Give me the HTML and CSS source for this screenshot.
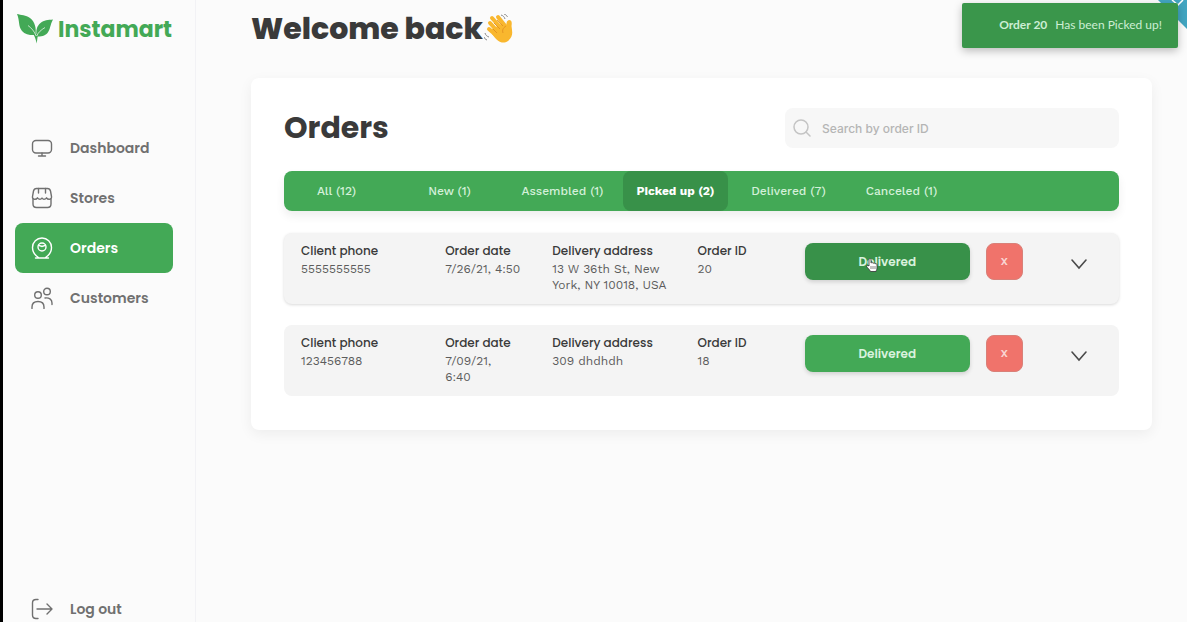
FILE: index.html
```html
<!DOCTYPE html>
<html lang="en">
<head>
  <meta charset="UTF-8">
  <meta name="viewport" content="width=device-width, initial-scale=1.0">
  <title>Instamart</title>
  <link rel="stylesheet" href="styles.css">
</head>
<body>
  <aside class="sidebar">
    <a class="logo" href="#">
      <svg width="36" height="30" viewBox="0 0 36 30">
        <path d="M0 0C4 1 9 1 13 4C18 8 19.500 14 18.500 21C14 21.500 8 20.500 5 17C1 12 3 7 0 0Z" fill="#43a956"/>
        <path d="M36 5.500C31 6 27 6 23.500 9C19.500 12.500 19 16 19.500 22.500C24 22.500 28 22 30.500 19C33.500 15 33 11 36 5.500Z" fill="#43a956"/>
        <path d="M18 19L21 21C20.300 24 20.300 26 19.700 29.500C19 26 18 23 16.500 20.500Z" fill="#43a956"/>
        <path d="M11 11.500C14.500 14 17.500 17.500 19.200 22M28 13.500C24 16 21 18.500 19.800 22" fill="none" stroke="#fbfbfb" stroke-width="0.700"/>
      </svg>
      <span>Instamart</span>
    </a>

    <nav class="menu">
      <a class="menu-item" href="#">
        <svg class="icon" viewBox="0 0 22 22">
          <rect x="1.5" y="3.5" width="19" height="12.5" rx="3.5"/>
          <path d="M11 16v3M7.500 19h7"/>
        </svg>
        Dashboard
      </a>
      <a class="menu-item" href="#">
        <svg class="icon" viewBox="0 0 22 22">
          <path d="M5.500 1.500h11c1.800 0 2.600.8 3 2.500l1 5.500c.3 1.700-.8 2.800-2.300 2.800-1.400 0-2.200-.6-2.700-1.500-.7 1-1.500 1.500-2.500 1.500s-1.500-.5-2-1.300c-.5.8-1 1.300-2 1.300s-1.800-.5-2.500-1.500c-.5.9-1.300 1.500-2.700 1.500-1.500 0-2.600-1.100-2.300-2.800l1-5.500c.4-1.700 1.200-2.500 3-2.500z"/>
          <path d="M2 12v5c0 2.500 1 3.500 3.500 3.500h11c2.500 0 3.500-1 3.500-3.500v-5M7.500 1.500V6M14.500 1.500V6"/>
        </svg>
        Stores
      </a>
      <a class="menu-item active" href="#">
        <svg class="icon" viewBox="0 0 22 22">
          <path d="M7.500 20.500C3.500 18 1.500 14.500 1.500 10.500a9.500 9.500 0 0 1 19 0c0 4-2 7.500-6 10M4.500 21h13"/>
          <circle cx="11" cy="10" r="4"/>
          <path d="M7.500 8c1.500 1.500 2.500.5 3.500 1.500 1-1 2 0 3.500-1.500"/>
        </svg>
        Orders
      </a>
      <a class="menu-item" href="#">
        <svg class="icon" viewBox="0 0 22 22">
          <circle cx="7" cy="8" r="3.300"/>
          <circle cx="16" cy="4.500" r="3.300"/>
          <path d="M1 21.500v-1.500c0-3.500 2.500-5.500 6-5.500s6 2 6 5.500v1.500M14 11c4-.7 7 1.500 7 5v1.500"/>
        </svg>
        Customers
      </a>
    </nav>

    <a class="menu-item logout" href="#">
      <svg class="icon" viewBox="0 0 22 22">
        <path d="M7 1.500H5C2.500 1.500 1.500 2.500 1.500 5v12c0 2.500 1 3.500 3.500 3.500h2M6 11h15M16 6l5 5-5 5"/>
      </svg>
      Log out
    </a>
  </aside>

  <main class="content">
    <h1 class="welcome">
      Welcome back
      <svg width="30" height="30" viewBox="0 0 30 30" role="img" aria-label="waving hand">
        <g fill="none" stroke="#f9b72e" stroke-width="4" stroke-linecap="round">
          <path d="M6 9L15 19M8 4L18 15M14 3L22 13M5 15L13 22"/>
        </g>
        <path d="M8 15L19 9L22 12C23 9 22 7 25 6C28 6 28 9 27.500 12C28 17 30 22 24 27C18 31 13 27 8 20Z" fill="#f9b72e"/>
        <path d="M10 9l6 6M13 6l6 6M9 15l4 4M22 12c-3 2-4 4-3 7" fill="none" stroke="#e08c20" stroke-width="0.800"/>
        <path d="M17 1c2 .5 3.500 2 4 4M20 0c2 .5 3 2 3.500 3M1 19c.5 2 2 3.500 4 4M0 23c.5 1.500 1.500 2.500 3 3" fill="none" stroke="#888" stroke-width="1"/>
      </svg>
    </h1>

    <section class="card">
      <div class="card-head">
        <h2>Orders</h2>
        <label class="search">
          <svg width="18" height="18" viewBox="0 0 18 18">
            <circle cx="8" cy="8" r="7"/>
            <path d="M13 13l4 4"/>
          </svg>
          <input type="text" placeholder="Search by order ID" aria-label="Search by order ID">
        </label>
      </div>

      <div class="tabs">
        <button type="button">All (12)</button>
        <button type="button">New (1)</button>
        <button type="button">Assembled (1)</button>
        <button type="button" class="active">Picked up (2)</button>
        <button type="button">Delivered (7)</button>
        <button type="button">Canceled (1)</button>
      </div>

      <div class="orders">
        <article class="order raised">
          <dl><dt>Client phone</dt><dd>5555555555</dd></dl>
          <dl><dt>Order date</dt><dd>7/26/21, 4:50</dd></dl>
          <dl><dt>Delivery address</dt><dd>13 W 36th St, New York, NY 10018, USA</dd></dl>
          <dl><dt>Order ID</dt><dd>20</dd></dl>
          <button type="button" class="deliver hovered">
            Delivered
            <svg class="cursor" width="12" height="14" viewBox="0 0 12 14">
              <path d="M3 8V2c0-2 2-2 2 0v3c1-.8 2-.5 2 .3 1-.6 2-.2 2 .5 1-.4 2 0 2 1V10c0 2-1 2.500-1 3.500H4.500C4 12 1 9.500.7 8.500.5 7.500 1.800 7 3 8z" fill="#fff" stroke="#333" stroke-width="0.800"/>
              <path d="M5 8v3M7 8v3M9 8v3" stroke="#333" stroke-width="0.600"/>
            </svg>
          </button>
          <button type="button" class="cancel">X</button>
          <button type="button" class="expand" aria-label="Show details">
            <svg width="18" height="12" viewBox="0 0 18 12"><path d="M2 2l7 8 7-8"/></svg>
          </button>
        </article>

        <article class="order">
          <dl><dt>Client phone</dt><dd>123456788</dd></dl>
          <dl><dt>Order date</dt><dd>7/09/21,<br>6:40</dd></dl>
          <dl><dt>Delivery address</dt><dd>309 dhdhdh</dd></dl>
          <dl><dt>Order ID</dt><dd>18</dd></dl>
          <button type="button" class="deliver">Delivered</button>
          <button type="button" class="cancel">X</button>
          <button type="button" class="expand" aria-label="Show details">
            <svg width="18" height="12" viewBox="0 0 18 12"><path d="M2 2l7 8 7-8"/></svg>
          </button>
        </article>
      </div>
    </section>
  </main>

  <a class="corner" href="#" aria-label="Source code">
    <svg width="29" height="29" viewBox="0 0 29 29">
      <path d="M0 0h29v29z" fill="#42a5c1"/>
      <path d="M14 0l6 5 5-5" fill="none" stroke="#fff" stroke-width="1.500"/>
    </svg>
  </a>
  <div class="toast" role="status"><strong>Order 20</strong><span>Has been Picked up!</span></div>
</body>
</html>
```

FILE: styles.css
```css
* {
  box-sizing: border-box;
}

body {
  margin: 0;
  min-height: 100vh;
  display: flex;
  border-left: 3px solid #000;
  background: #fbfbfb;
  color: #3a3a3a;
  font-family: Poppins, Inter, sans-serif;
}

a {
  text-decoration: none;
}

button {
  border: none;
  padding: 0;
  font-family: inherit;
  cursor: pointer;
}

/* sidebar */
.sidebar {
  flex: 0 0 193px;
  height: 100vh;
  display: flex;
  flex-direction: column;
  padding: 11px 22px 0 12px;
  border-right: 1px solid #f2f2f5;
}

.logo {
  display: flex;
  align-items: center;
  gap: 5px;
  height: 36px;
  padding-left: 2px;
  color: #43a956;
  font-size: 22px;
  font-weight: 700;
}

.logo svg {
  flex: none;
}

.menu {
  margin-top: 76px;
}

.menu-item {
  display: flex;
  align-items: center;
  gap: 17px;
  height: 50px;
  padding: 0 16px;
  border-radius: 8px;
  color: #707070;
  font-size: 14px;
  font-weight: 600;
}

.menu-item.active {
  background: #43a956;
  color: #fff;
}

.logout {
  height: 26px;
  margin-top: auto;
}

.icon {
  width: 22px;
  height: 22px;
  fill: none;
  stroke: currentColor;
  stroke-width: 1.4;
  stroke-linecap: round;
  stroke-linejoin: round;
}

/* content */
.content {
  flex: 1;
  min-width: 0;
  padding: 11px 35px 35px 55px;
}

.welcome {
  display: flex;
  align-items: center;
  gap: 1px;
  margin: 0 0 31px;
  height: 36px;
  font-size: 30px;
  font-weight: 800;
}

.card {
  padding: 30px 33px 34px;
  border-radius: 8px;
  background: #fff;
  box-shadow: 0 4px 14px rgba(0, 0, 0, 0.06);
}

.card-head {
  display: flex;
  justify-content: space-between;
  align-items: center;
  margin-bottom: 23px;
}

.card-head h2 {
  margin: 0;
  font-size: 30px;
  line-height: 38px;
  font-weight: 700;
}

.search {
  display: flex;
  align-items: center;
  gap: 11px;
  width: 40%;
  height: 40px;
  padding: 0 8px;
  border-radius: 8px;
  background: #f7f7f7;
}

.search svg {
  flex: none;
  fill: none;
  stroke: #c4c4c4;
  stroke-width: 1.5;
  stroke-linecap: round;
}

.search input {
  flex: 1;
  min-width: 0;
  padding: 0;
  border: none;
  outline: none;
  background: none;
  font: 500 12px Inter, sans-serif;
}

.search input::placeholder {
  color: #b5b5b5;
}

.tabs {
  display: flex;
  gap: 8px;
  height: 40px;
  margin-bottom: 22px;
  border-radius: 8px;
  background: #43a956;
  box-shadow: 0 5px 10px rgba(0, 0, 0, 0.07);
}

.tabs button {
  flex: 0 1 105px;
  border-radius: 8px;
  background: none;
  color: #d3f0d9;
  font: 500 12px "Work Sans", Inter, sans-serif;
  white-space: nowrap;
}

.tabs .active {
  background: #389149;
  color: #fff;
  font-weight: 700;
}

.orders {
  display: grid;
  gap: 21px;
}

.order {
  display: grid;
  grid-template-columns: 128fr 91fr 129fr 91fr 165fr 37px 80fr;
  column-gap: 16px;
  align-items: start;
  padding: 10px 0 11px 17px;
  border-radius: 8px;
  background: #f4f4f4;
}

.order.raised {
  box-shadow: 0 1px 3px rgba(0, 0, 0, 0.15);
}

.order dl {
  margin: 0;
}

.order dt {
  margin-bottom: 2px;
  font-size: 12px;
  line-height: 16px;
  font-weight: 500;
  white-space: nowrap;
}

.order dd {
  margin: 0;
  color: #5c5c5c;
  font: 400 12px/16px "Work Sans", Inter, sans-serif;
}

.deliver {
  position: relative;
  height: 37px;
  border-radius: 8px;
  background: #43a956;
  color: #d9f2de;
  font-size: 12px;
  font-weight: 600;
  box-shadow: 0 2px 4px rgba(0, 0, 0, 0.15);
}

.deliver.hovered {
  background: #389149;
}

.cursor {
  position: absolute;
  left: 61px;
  top: 15px;
}

.cancel {
  height: 37px;
  border: 1px solid #d98078;
  border-radius: 8px;
  background: #f0736b;
  color: #f9d5d2;
  font-size: 11px;
  font-weight: 600;
}

.expand {
  display: flex;
  align-items: center;
  justify-content: center;
  height: 41px;
  background: none;
}

.expand svg {
  fill: none;
  stroke: #4a4a4a;
  stroke-width: 1.6;
  stroke-linecap: round;
}

/* notification */
.corner {
  position: absolute;
  top: 0;
  right: 0;
}

.corner svg {
  display: block;
}

.toast {
  position: absolute;
  top: 3px;
  right: 9px;
  display: flex;
  align-items: center;
  gap: 8px;
  height: 45px;
  padding: 0 16px 2px 37px;
  border-radius: 2px;
  background: #3a964b;
  color: #cdeed4;
  font-family: Lato, sans-serif;
  font-size: 12px;
  box-shadow: 0 3px 8px rgba(0, 0, 0, 0.25);
}
```
